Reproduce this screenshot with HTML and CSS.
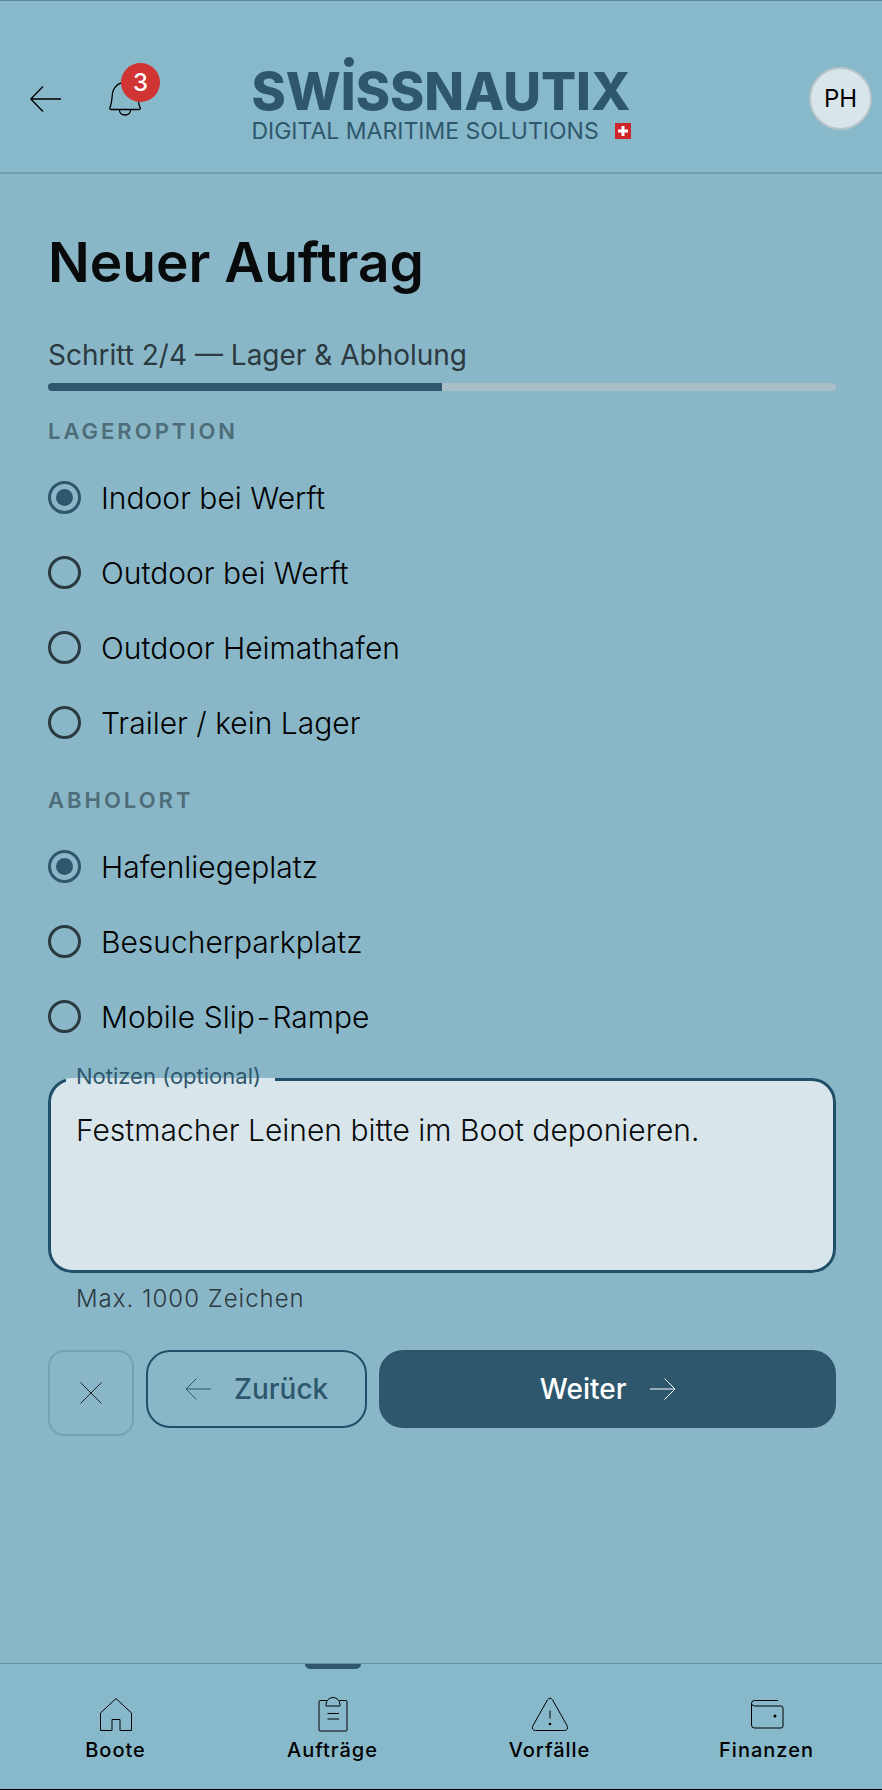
FILE: index.html
```html
<!DOCTYPE html>
<html lang="de">
<head>
    <meta charset="UTF-8">
    <meta name="viewport" content="width=device-width, initial-scale=1.0">
    <title>Neuer Auftrag</title>
    <link rel="stylesheet" href="styles.css">
</head>
<body>
    <header class="header">
        <div class="header-left">
            <button class="icon-btn" type="button" aria-label="Zurück">
                <svg width="32" height="32" viewBox="0 0 32 32"><path d="M31 16H1M13 3.5L.8 16L13 28.5"/></svg>
            </button>
            <button class="icon-btn bell" type="button" aria-label="Benachrichtigungen">
                <svg width="32" height="36" viewBox="0 0 32 36"><path d="M2 28.500C.8 28.500.5 27.800.9 26.800C2.400 23.500 2.800 20 3.300 14C3.900 6.500 9 1.500 16 1.500S28.100 6.500 28.700 14C29.200 20 29.600 23.500 31.100 26.800C31.500 27.800 31.200 28.500 30 28.500ZM10.300 28.500C10.500 32 12.800 34 16 34S21.500 32 21.700 28.500"/></svg>
                <span class="badge">3</span>
            </button>
        </div>
        <div class="logo">
            <div class="logo-name">SW<span class="logo-i">I</span>SSNAUTIX</div>
            <div class="logo-claim">
                <span>DIGITAL MARITIME SOLUTIONS</span>
                <svg class="flag" width="16" height="16" viewBox="0 0 16 16"><rect width="16" height="16"/><path d="M8 3v10M3 8h10"/></svg>
            </div>
        </div>
        <button class="avatar" type="button">PH</button>
    </header>

    <main class="main">
        <h1>Neuer Auftrag</h1>
        <p class="step">Schritt 2/4 — Lager &amp; Abholung</p>
        <div class="progress" role="progressbar" aria-valuenow="50" aria-valuemin="0" aria-valuemax="100">
            <div class="progress-bar" style="width: 50%"></div>
        </div>

        <form>
            <section class="group" role="radiogroup" aria-labelledby="lager">
                <h2 id="lager">LAGEROPTION</h2>
                <label class="radio"><input type="radio" name="lager" checked>Indoor bei Werft</label>
                <label class="radio"><input type="radio" name="lager">Outdoor bei Werft</label>
                <label class="radio"><input type="radio" name="lager">Outdoor Heimathafen</label>
                <label class="radio"><input type="radio" name="lager">Trailer / kein Lager</label>
            </section>

            <section class="group" role="radiogroup" aria-labelledby="abholort">
                <h2 id="abholort">ABHOLORT</h2>
                <label class="radio"><input type="radio" name="abholort" checked>Hafenliegeplatz</label>
                <label class="radio"><input type="radio" name="abholort">Besucherparkplatz</label>
                <label class="radio"><input type="radio" name="abholort"><span>Mobile Slip<span class="hyphen">&#8209;</span>Rampe</span></label>
            </section>

            <fieldset class="notes">
                <legend><label for="notizen">Notizen (optional)</label></legend>
                <textarea id="notizen" maxlength="1000" aria-describedby="hinweis">Festmacher Leinen bitte im Boot deponieren.</textarea>
            </fieldset>
            <p class="hint" id="hinweis">Max. 1000 Zeichen</p>

            <div class="actions">
                <button class="btn btn-close" type="button" aria-label="Abbrechen">
                    <svg width="22" height="22" viewBox="0 0 22 22"><path d="M.5 .5L21.500 21.500M21.500 .5L.5 21.500"/></svg>
                </button>
                <button class="btn btn-back" type="button">
                    <svg width="26" height="22" viewBox="0 0 26 22"><path d="M26 11H1M11.500 .5L1 11L11.500 21.500"/></svg>
                    Zurück
                </button>
                <button class="btn btn-next" type="button">
                    Weiter
                    <svg width="26" height="22" viewBox="0 0 26 22"><path d="M0 11H25M14.500 .5L25 11L14.500 21.500"/></svg>
                </button>
            </div>
        </form>
    </main>

    <nav class="nav">
        <a href="#boote">
            <svg width="38" height="38" viewBox="0 0 38 38"><path d="M3.500 35.500V18L19 3.500L34.500 18V35.500H23V24.500H15V35.500Z"/></svg>
            Boote
        </a>
        <a href="#auftraege" class="active" aria-current="page">
            <svg width="38" height="38" viewBox="0 0 38 38"><path d="M12.500 5.500H6A1 1 0 0 0 5 6.500V35A1 1 0 0 0 6 36H32A1 1 0 0 0 33 35V6.500A1 1 0 0 0 32 5.500H25.500M12 11V9.500A7 7 0 0 1 26 9.500V11ZM13.500 18.500H25M13.500 24H25"/></svg>
            Aufträge
        </a>
        <a href="#vorfaelle">
            <svg width="38" height="38" viewBox="0 0 38 38"><path d="M16.500 4.800Q19 1.500 21.500 4.800L36 30.500Q38 35 33.500 35.500H4.500Q0 35 2 30.500ZM19 15.500V23.500"/><circle class="dot" cx="19" cy="29" r="1.300"/></svg>
            Vorfälle
        </a>
        <a href="#finanzen">
            <svg width="38" height="38" viewBox="0 0 38 38"><path d="M30 5.500H6.500A3 3 0 0 0 3.500 8.500V30A3 3 0 0 0 6.500 33H33A2 2 0 0 0 35 31V13A2 2 0 0 0 33 11H6.500A3 3 0 0 1 3.500 8.500"/><circle class="dot" cx="27" cy="21" r="1.500"/></svg>
            Finanzen
        </a>
    </nav>
</body>
</html>
```
FILE: styles.css
```css
html{
    box-sizing: border-box;
    font-family: Inter, sans-serif;
    font-size: 30px;
}

*,
*:after,
*:before{
    box-sizing: inherit;
}

body{
    display: flex;
    flex-direction: column;
    min-height: 100vh;
    margin: 0;
    color: #080a0b;
    background-color: #8ab7c8;
    border-top: 1px solid #5b8798;
    border-bottom: 1px solid #000;
}

button,
textarea{
    font: inherit;
    color: inherit;
}

svg{
    display: block;
    flex: none;
    fill: none;
    stroke: currentColor;
    stroke-width: 1;
    stroke-linejoin: round;
}

/* HEADER */
.header{
    display: grid;
    grid-template-columns: 1fr auto 1fr;
    align-items: center;
    height: 173px;
    padding: 24px 10px 0;
    background-color: #88b9ca;
    border-bottom: 2px solid #719fb0;
}

.header-left{
    display: flex;
    align-items: center;
    gap: 47px;
    padding-left: 20px;
}

.header-left svg{
    stroke-width: 1.3;
    color: #000;
}

.icon-btn{
    position: relative;
    padding: 0;
    border: 0;
    background: none;
}

.badge{
    position: absolute;
    top: -18px;
    left: 12px;
    width: 39px;
    border-radius: 50%;
    font-size: 24px;
    font-weight: 500;
    line-height: 39px;
    color: #fff;
    background-color: #d03533;
}

.logo{
    padding-top: 14px;
    color: #2e576d;
}

.logo-name{
    font-size: 52px;
    font-weight: 800;
    line-height: 50px;
}

.logo-i{
    position: relative;
}

.logo-i:before{
    content: "";
    position: absolute;
    top: -3px;
    left: 3px;
    width: 10px;
    height: 10px;
    border-radius: 50%;
    background-color: #2e576d;
}

.logo-claim{
    display: flex;
    align-items: center;
    justify-content: space-between;
    gap: 8px;
    font-size: 23px;
    line-height: 28px;
}

.flag{
    fill: #cf2429;
    stroke: none;
}

.flag path{
    stroke: #fff;
    stroke-width: 3;
}

.avatar{
    justify-self: end;
    width: 63px;
    height: 63px;
    padding: 0;
    border: 2px solid #b8c4c9;
    border-radius: 50%;
    font-size: 24px;
    color: #000;
    background-color: #d8e6eb;
}

/* FORMULARIO */
.main{
    flex: 1;
    padding: 54px 46px 0 48px;
}

h1{
    margin: 0 0 39px;
    font-size: 55px;
    font-weight: 600;
    line-height: 68px;
}

.step{
    margin: 0 0 8px;
    font-size: 28px;
    line-height: 40px;
    color: #2b3a40;
}

.progress{
    height: 8px;
    border-radius: 4px;
    overflow: hidden;
    background-color: #a9bdc6;
}

.progress-bar{
    height: 100%;
    background-color: #2e576d;
}

.group{
    padding-top: 24px;
}

h2{
    margin: 0 0 13px;
    font-size: 22px;
    font-weight: 600;
    line-height: 32px;
    letter-spacing: 3px;
    color: #4d6d78;
}

.radio{
    display: flex;
    align-items: center;
    gap: 20px;
    height: 75px;
    color: #000;
}

.radio input{
    appearance: none;
    display: grid;
    place-items: center;
    width: 33px;
    height: 33px;
    margin: 0;
    border: 3px solid #2b3a40;
    border-radius: 50%;
}

.radio input:checked{
    border-color: #2e576d;
}

.radio input:checked:before{
    content: "";
    width: 17px;
    height: 17px;
    border-radius: 50%;
    background-color: #2e576d;
}

.hyphen{
    margin: 0 4px;
}

.notes{
    margin: 8px 0 0;
    padding: 0 15px;
    border: 3px solid #1f506a;
    border-radius: 24px;
    background-color: #d8e6eb;
}

.notes legend{
    padding: 0 14px 6px 10px;
    font-size: 22px;
    font-weight: 400;
    line-height: 28px;
    color: #2e576d;
}

.notes textarea{
    display: block;
    width: 100%;
    height: 174px;
    padding: 12px 10px;
    border: 0;
    outline: 0;
    line-height: 44px;
    resize: none;
    background: none;
}

.hint{
    margin: 10px 28px 35px;
    font-size: 24px;
    line-height: 32px;
    letter-spacing: 1px;
    color: #2b3a40;
}

.radio,
.notes,
.hint{
    font-weight: 300;
}

.actions{
    display: flex;
    align-items: flex-start;
    gap: 12px;
}

.btn{
    display: flex;
    align-items: center;
    justify-content: center;
    gap: 23px;
    height: 78px;
    padding: 0 37px;
    border: 2px solid #1f506a;
    border-radius: 24px;
    font-size: 28px;
    font-weight: 500;
    color: #2e576d;
    background: none;
}

.btn-close{
    width: 86px;
    height: 86px;
    padding: 0;
    border-color: #76a1b0;
    border-radius: 16px;
    color: #1d2326;
}

.btn-next{
    flex: 1;
    border-color: #2e576d;
    color: #fff;
    background-color: #2e576d;
}

/* NAVEGACION */
.nav{
    display: grid;
    grid-template-columns: repeat(4, 1fr);
    height: 126px;
    padding: 0 7px;
    background-color: #88b9ca;
    border-top: 1px solid #6795a5;
}

.nav a{
    position: relative;
    display: flex;
    flex-direction: column;
    align-items: center;
    padding-top: 31px;
    font-size: 20px;
    font-weight: 500;
    line-height: 34px;
    letter-spacing: 1px;
    text-decoration: none;
    color: #000;
}

.nav .active:before{
    content: "";
    position: absolute;
    top: 0;
    width: 56px;
    height: 5px;
    border-radius: 0 0 5px 5px;
    background-color: #2e576d;
}

.nav .dot{
    fill: #000;
    stroke: none;
}
```
